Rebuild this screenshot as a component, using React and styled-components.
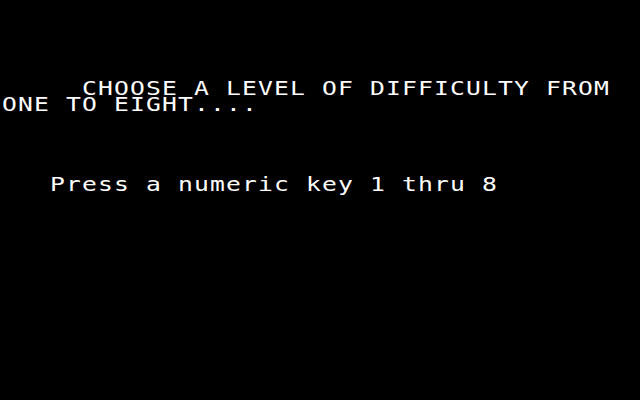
import styled, { createGlobalStyle } from "styled-components";

const GlobalStyle = createGlobalStyle`
  html, body {
    margin: 0;
    padding: 0;
    background: #000;
  }
`;

// 40 x 25 text screen, 16px cells
const rows = [
  { row: 5, col: 5, text: "CHOOSE A LEVEL OF DIFFICULTY FROM" },
  { row: 6, col: 0, text: "ONE TO EIGHT...." },
  { row: 11, col: 3, text: "Press a numeric key 1 thru 8" },
];

export default function App() {
  const lines = Array.from({ length: 25 }, (_, i) => rows.find((r) => r.row === i));

  return (
    <>
      <GlobalStyle />
      <Screen>
        {lines.map((line, i) => (
          <Line key={i}>
            {line ? <Text $col={line.col}>{line.text}</Text> : null}
          </Line>
        ))}
      </Screen>
    </>
  );
}

const Screen = styled.div`
  width: 640px;
  height: 400px;
  background: #000;
  overflow: hidden;
  display: flex;
  flex-direction: column;
`;

const Line = styled.div`
  height: 16px;
  line-height: 16px;
  white-space: pre;
`;

const Text = styled.span`
  display: inline-block;
  margin-left: ${({ $col }) => $col * 16 + 2}px;
  font-family: "DejaVu Sans Mono", monospace;
  font-size: 19px;
  line-height: 16px;
  letter-spacing: 0.869px;
  color: #fff;
  transform: scaleX(1.3);
  transform-origin: left center;
`;
